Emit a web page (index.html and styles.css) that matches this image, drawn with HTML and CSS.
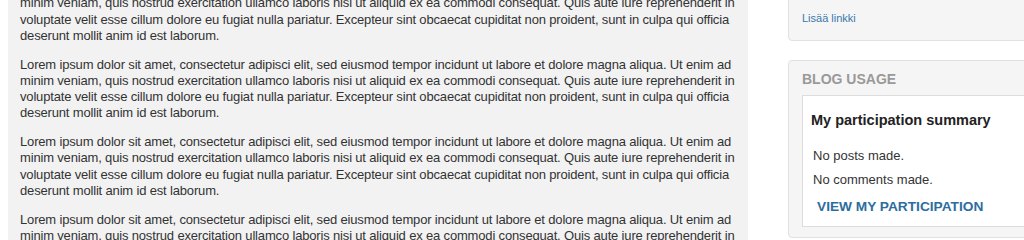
FILE: index.html
```html
<!DOCTYPE html>
<html lang="en">
<head>
<meta charset="utf-8">
<title>Blog</title>
<link rel="stylesheet" href="styles.css">
</head>
<body>
<div class="page">
  <main class="main">
    <p>Lorem ipsum dolor sit amet, consectetur adipisci elit, sed eiusmod tempor incidunt ut labore et dolore magna aliqua. Ut enim ad<br>minim veniam, quis nostrud exercitation ullamco laboris nisi ut aliquid ex ea commodi consequat. Quis aute iure reprehenderit in<br>voluptate velit esse cillum dolore eu fugiat nulla pariatur. Excepteur sint obcaecat cupiditat non proident, sunt in culpa qui officia<br>deserunt mollit anim id est laborum.</p>
    <p>Lorem ipsum dolor sit amet, consectetur adipisci elit, sed eiusmod tempor incidunt ut labore et dolore magna aliqua. Ut enim ad<br>minim veniam, quis nostrud exercitation ullamco laboris nisi ut aliquid ex ea commodi consequat. Quis aute iure reprehenderit in<br>voluptate velit esse cillum dolore eu fugiat nulla pariatur. Excepteur sint obcaecat cupiditat non proident, sunt in culpa qui officia<br>deserunt mollit anim id est laborum.</p>
    <p>Lorem ipsum dolor sit amet, consectetur adipisci elit, sed eiusmod tempor incidunt ut labore et dolore magna aliqua. Ut enim ad<br>minim veniam, quis nostrud exercitation ullamco laboris nisi ut aliquid ex ea commodi consequat. Quis aute iure reprehenderit in<br>voluptate velit esse cillum dolore eu fugiat nulla pariatur. Excepteur sint obcaecat cupiditat non proident, sunt in culpa qui officia<br>deserunt mollit anim id est laborum.</p>
    <p>Lorem ipsum dolor sit amet, consectetur adipisci elit, sed eiusmod tempor incidunt ut labore et dolore magna aliqua. Ut enim ad<br>minim veniam, quis nostrud exercitation ullamco laboris nisi ut aliquid ex ea commodi consequat. Quis aute iure reprehenderit in<br>voluptate velit esse cillum dolore eu fugiat nulla pariatur. Excepteur sint obcaecat cupiditat non proident, sunt in culpa qui officia<br>deserunt mollit anim id est laborum.</p>
  </main>
  <aside class="sidebar">
    <section class="block block-links">
      <a class="add-link" href="#">Lisää linkki</a>
    </section>
    <section class="block block-usage">
      <h2 class="block-title">Blog usage</h2>
      <div class="summary">
        <h3 class="summary-title">My participation summary</h3>
        <p class="summary-line">No posts made.</p>
        <p class="summary-line">No comments made.</p>
        <a class="view-link" href="#">View my participation</a>
      </div>
    </section>
  </aside>
</div>
</body>
</html>
```

FILE: styles.css
```css
html, body {
  margin: 0;
  padding: 0;
  background: #ffffff;
  overflow: hidden;
}

body {
  font-family: "Liberation Sans", Arial, sans-serif;
  color: #333333;
}

.page {
  display: flex;
  align-items: flex-start;
  padding-left: 8px;
  margin-top: -21px;
}

.main {
  box-sizing: border-box;
  flex: 0 0 740px;
  width: 740px;
  background: #f2f2f2;
  padding: 0 12px;
  font-size: 13px;
  letter-spacing: -0.165px;
  line-height: 16.25px;
  white-space: nowrap;
  overflow: hidden;
}

.main p {
  margin: 0 0 12.5px;
}

.sidebar {
  flex: 0 0 280px;
  margin-left: 40px;
  display: flex;
  flex-direction: column;
  gap: 19px;
}

.block {
  background: #f5f5f5;
  border: 1px solid #e1e1e1;
  border-radius: 4px;
  padding: 0 13px;
}

.block-links {
  padding-top: 30px;
  padding-bottom: 14px;
}

.add-link {
  display: block;
  font-size: 11px;
  line-height: 16px;
  color: #3a78ab;
  text-decoration: none;
}

.block-usage {
  padding-top: 8px;
  padding-bottom: 10px;
}

.block-title {
  margin: 0 0 6px;
  font-size: 14px;
  line-height: 20px;
  font-weight: bold;
  color: #999999;
  text-transform: uppercase;
}

.summary {
  background: #ffffff;
  border: 1px solid #dddddd;
  padding: 14px 8px 10px;
}

.summary-title {
  margin: 0 0 18px;
  font-size: 14.5px;
  line-height: 20px;
  font-weight: bold;
  color: #222222;
  white-space: nowrap;
}

.summary-line {
  margin: 0 0 7.75px 2px;
  font-size: 13px;
  line-height: 16.25px;
  color: #333333;
}

.view-link {
  display: block;
  margin: 10px 0 0 6px;
  font-size: 13.7px;
  line-height: 18px;
  font-weight: bold;
  color: #2d6d9e;
  text-decoration: none;
  text-transform: uppercase;
  white-space: nowrap;
}
```
